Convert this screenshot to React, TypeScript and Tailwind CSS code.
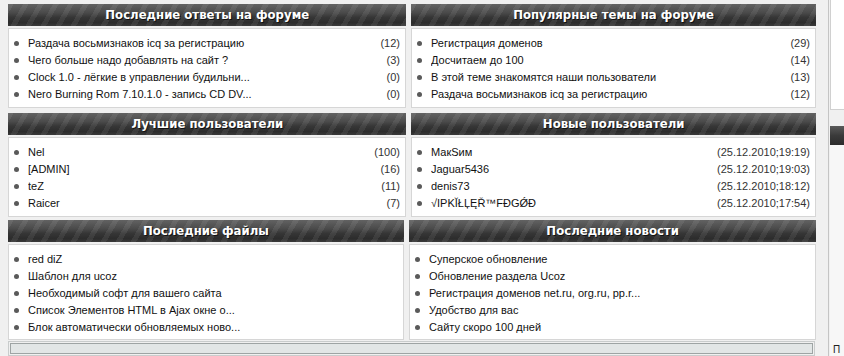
import React from "react";

type Item = { t: string; c?: string };

const FONT = "font-['Liberation_Sans',Arial,sans-serif]";

function Header({ title }: { title: string }) {
  return (
    <div className="h-[22px] flex items-center justify-center text-white font-bold text-[13px] font-['DejaVu_Sans',sans-serif] [text-shadow:1px_1px_0_#111] [background-image:repeating-linear-gradient(120deg,rgba(255,255,255,0.07)_0px,rgba(255,255,255,0.07)_5px,transparent_5px,transparent_13px),linear-gradient(to_bottom,#626262_0%,#4a4a4a_40%,#363636_60%,#2c2c2c_85%,#3a3a3a_100%)]">
      <span className="inline-block whitespace-nowrap scale-x-[0.9]">{title}</span>
    </div>
  );
}

function Block({ title, items, bodyH }: { title: string; items: Item[]; bodyH: string }) {
  return (
    <div className="flex flex-col">
      <Header title={title} />
      <div className={`mt-[2px] bg-white border border-[#d6d6d6] pt-[6px] ${bodyH}`}>
        <ul className={`${FONT} text-[11px] text-[#111]`}>
          {items.map((it, i) => (
            <li key={i} className="h-[17px] flex items-center pl-[5px] pr-[5px]">
              <span className="w-[5px] h-[5px] rounded-full bg-[#5a5a5a] mr-[9px] shrink-0" />
              <span className="flex-1 whitespace-nowrap overflow-hidden">{it.t}</span>
              {it.c && <span className="text-[#333] whitespace-nowrap">{it.c}</span>}
            </li>
          ))}
        </ul>
      </div>
    </div>
  );
}

export default function App() {
  return (
    <div className="w-[844px] h-[356px] overflow-hidden bg-[#f0f0f0] flex">
      <div className="w-[828px] shrink-0 pl-[8px] pt-[4px] flex flex-col">
        <div className="flex gap-[5px]">
          <div className="w-[398px]">
            <Block
              title="Последние ответы на форуме"
              bodyH="h-[80px]"
              items={[
                { t: "Раздача восьмизнаков icq за регистрацию", c: "(12)" },
                { t: "Чего больше надо добавлять на сайт ?", c: "(3)" },
                { t: "Clock 1.0 - лёгкие в управлении будильни...", c: "(0)" },
                { t: "Nero Burning Rom 7.10.1.0 - запись CD DV...", c: "(0)" },
              ]}
            />
          </div>
          <div className="w-[405px]">
            <Block
              title="Популярные темы на форуме"
              bodyH="h-[80px]"
              items={[
                { t: "Регистрация доменов", c: "(29)" },
                { t: "Досчитаем до 100", c: "(14)" },
                { t: "В этой теме знакомятся наши пользователи", c: "(13)" },
                { t: "Раздача восьмизнаков icq за регистрацию", c: "(12)" },
              ]}
            />
          </div>
        </div>
        <div className="flex gap-[5px] mt-[5px]">
          <div className="w-[398px]">
            <Block
              title="Лучшие пользователи"
              bodyH="h-[80px]"
              items={[
                { t: "Nel", c: "(100)" },
                { t: "[ADMIN]", c: "(16)" },
                { t: "teZ", c: "(11)" },
                { t: "Raicer", c: "(7)" },
              ]}
            />
          </div>
          <div className="w-[405px]">
            <Block
              title="Новые пользователи"
              bodyH="h-[80px]"
              items={[
                { t: "МакЅим", c: "(25.12.2010;19:19)" },
                { t: "Jaguar5436", c: "(25.12.2010;19:03)" },
                { t: "denis73", c: "(25.12.2010;18:12)" },
                { t: "√IPKĬŁĻĘŘ™FĐGǾĐ", c: "(25.12.2010;17:54)" },
              ]}
            />
          </div>
        </div>
        <div className="flex gap-[5px] mt-[3px]">
          <div className="w-[396px]">
            <Block
              title="Последние файлы"
              bodyH="h-[96px]"
              items={[
                { t: "red diZ" },
                { t: "Шаблон для ucoz" },
                { t: "Необходимый софт для вашего сайта" },
                { t: "Список Элементов HTML в Ajax окне о..." },
                { t: "Блок автоматически обновляемых ново..." },
              ]}
            />
          </div>
          <div className="w-[407px]">
            <Block
              title="Последние новости"
              bodyH="h-[96px]"
              items={[
                { t: "Суперское обновление" },
                { t: "Обновление раздела Ucoz" },
                { t: "Регистрация доменов net.ru, org.ru, pp.r..." },
                { t: "Удобство для вас" },
                { t: "Сайту скоро 100 дней" },
              ]}
            />
          </div>
        </div>
        <div className="mt-[1px] w-[807px] h-[30px] border border-[#c9cccc] p-[1px]">
          <div className="h-full border border-[#9ea4a4] bg-[#e2e6e6]" />
        </div>
      </div>
      <div className="flex-1 border-l border-[#c4c4c4] flex flex-col pl-[1px]">
        <div className="h-[110px] bg-white border-l border-b border-[#d0d0d0]" />
        <div className="h-[16px]" />
        <div className="h-[19px] [background-image:linear-gradient(to_bottom,#5a5a5a,#3a3a3a_50%,#2c2c2c)]" />
        <div className="flex-1 bg-[#f7f7f7] flex items-end pl-[3px]">
          <span className={`${FONT} text-[10px] leading-[12px] text-[#222]`}>П</span>
        </div>
      </div>
    </div>
  );
}
